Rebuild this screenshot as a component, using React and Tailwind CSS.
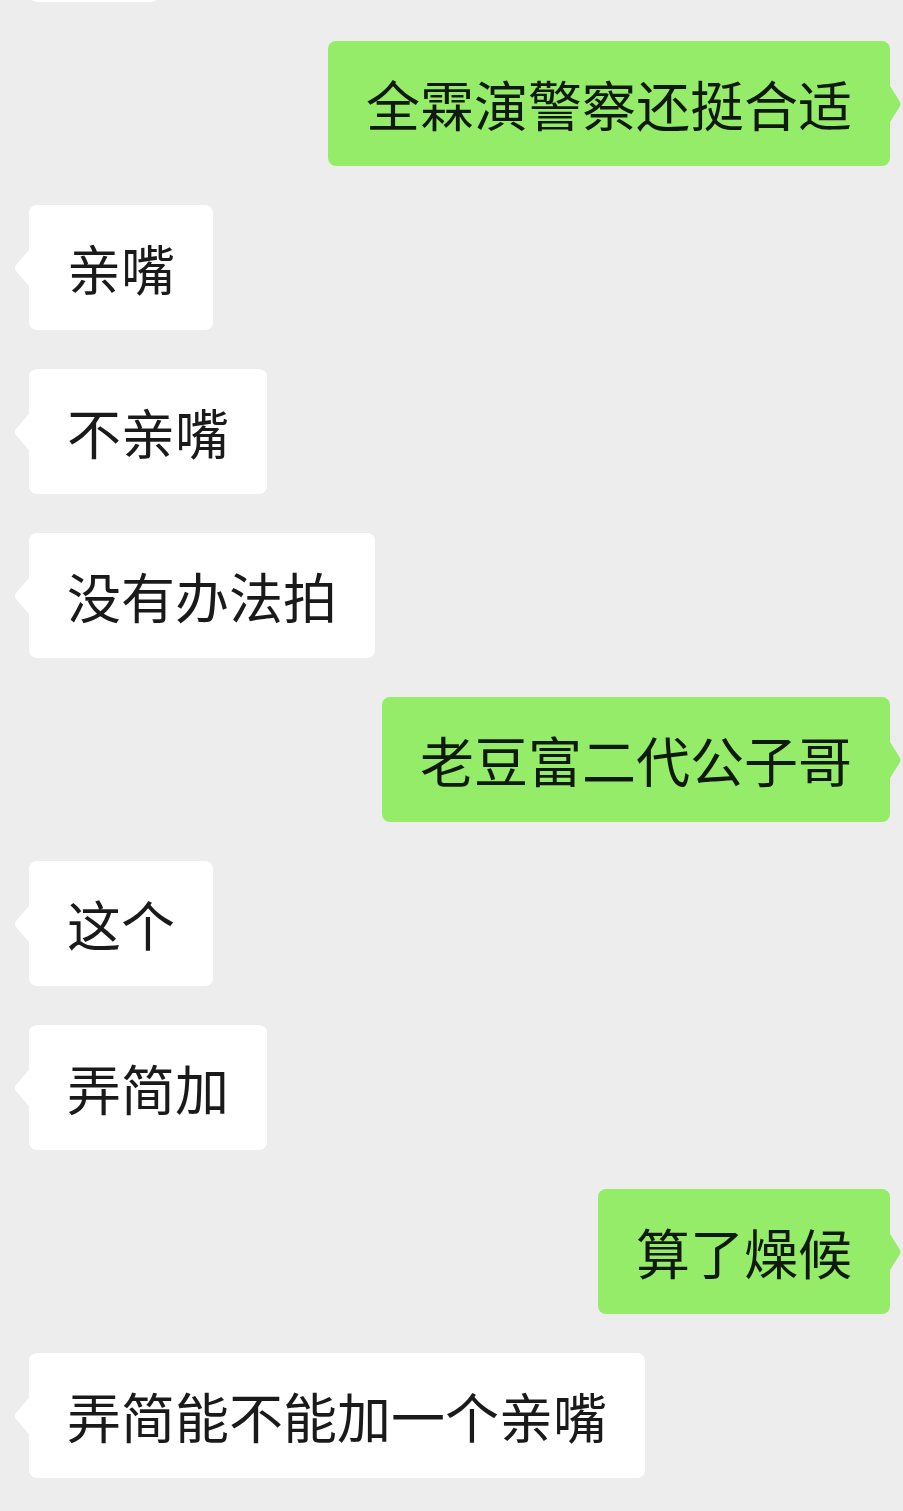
import React from 'react';

const messages = [
  { id: 1, side: 'right', text: '全霖演警察还挺合适' },
  { id: 2, side: 'left', text: '亲嘴' },
  { id: 3, side: 'left', text: '不亲嘴' },
  { id: 4, side: 'left', text: '没有办法拍' },
  { id: 5, side: 'right', text: '老豆富二代公子哥' },
  { id: 6, side: 'left', text: '这个' },
  { id: 7, side: 'left', text: '弄简加' },
  { id: 8, side: 'right', text: '算了燥候' },
  { id: 9, side: 'left', text: '弄简能不能加一个亲嘴' },
];

const Bubble = ({ side, text }) => {
  const isMe = side === 'right';
  return (
    <div className={`flex ${isMe ? 'justify-end' : 'justify-start'}`}>
      <div
        className={`relative rounded-[8px] px-[38px] py-[35px] text-[54px] leading-[55px] whitespace-nowrap ${
          isMe ? 'bg-[#95ec69] text-[#0f1a0c]' : 'bg-white text-[#1a1a1a]'
        }`}
      >
        {isMe ? (
          <svg
            width="12"
            height="40"
            viewBox="0 0 12 40"
            className="absolute -right-[12px] top-1/2 -translate-y-1/2"
          >
            <path d="M0 2 L9.5 17 Q11.5 20 9.5 23 L0 38 Z" fill="#95ec69" />
          </svg>
        ) : (
          <svg
            width="16"
            height="40"
            viewBox="0 0 16 40"
            className="absolute -left-[16px] top-1/2 -translate-y-1/2"
          >
            <path d="M16 2 L3 17 Q0.8 20 3 23 L16 38 Z" fill="#ffffff" />
          </svg>
        )}
        {text}
      </div>
    </div>
  );
};

export default function App() {
  return (
    <div
      className="w-[903px] h-[1511px] overflow-hidden bg-[#ededed]"
      style={{ fontFamily: '"Noto Sans CJK SC", "Noto Sans", sans-serif' }}
    >
      <div className="flex flex-col gap-[39px] pl-[29px] pr-[13px]">
        {/* previous message, scrolled almost out of view */}
        <div className="-mt-[123px] h-[125px] w-[130px] rounded-[8px] bg-white" />
        {messages.map((m) => (
          <Bubble key={m.id} side={m.side} text={m.text} />
        ))}
      </div>
    </div>
  );
}
